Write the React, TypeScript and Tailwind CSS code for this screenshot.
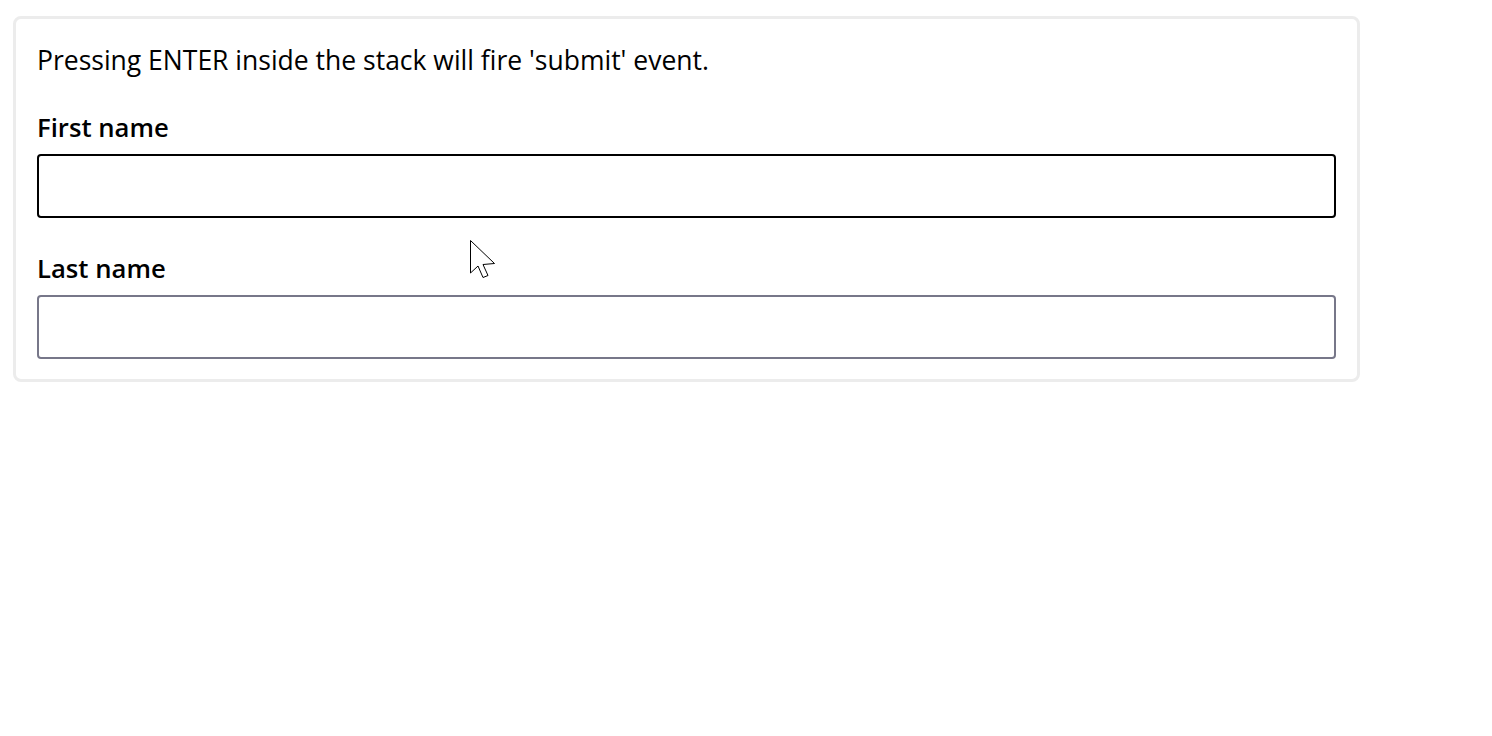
import { useState } from "react"

const FONT = { fontFamily: '"Open Sans", "Noto Sans", sans-serif' }

function Field({ label, focused, value, onChange }: { label: string; focused?: boolean; value: string; onChange: (v: string) => void }) {
  return (
    <div className="flex flex-col">
      <label className="text-[25.7px] leading-[32px] font-semibold text-black">{label}</label>
      <input
        value={value}
        onChange={e => onChange(e.target.value)}
        className={`mt-[10px] h-[64px] w-full rounded-[4px] border-2 bg-white px-3 text-[20px] outline-none ${
          focused ? "border-black" : "border-[#777789]"
        }`}
      />
    </div>
  )
}

export default function App() {
  const [first, setFirst] = useState("")
  const [last,  setLast]  = useState("")

  return (
    <div className="relative min-h-screen bg-white pl-[13px] pt-[16px]" style={FONT}>
      <form
        onSubmit={e => e.preventDefault()}
        className="flex w-[1347px] flex-col rounded-[8px] border-[3px] border-[#ececec] px-[21px] pt-[25px] pb-[20px]"
      >
        <p className="text-[26.5px] leading-[32px] text-black">Pressing ENTER inside the stack will fire 'submit' event.</p>

        <div className="mt-[36px]">
          <Field label="First name" focused value={first} onChange={setFirst} />
        </div>
        <div className="mt-[35px]">
          <Field label="Last name" value={last} onChange={setLast} />
        </div>
      </form>

      {/* mouse pointer */}
      <svg className="absolute left-[470px] top-[240px] h-[40px] w-[27px]" viewBox="0 0 27 40">
        <path d="M0.5 0.5 L0.5 33 L8 26 L13 37.5 L18 35.5 L13 24.5 L24.5 23.5 Z" fill="#fff" stroke="#000" strokeWidth="1" strokeLinejoin="miter" />
      </svg>
    </div>
  )
}
